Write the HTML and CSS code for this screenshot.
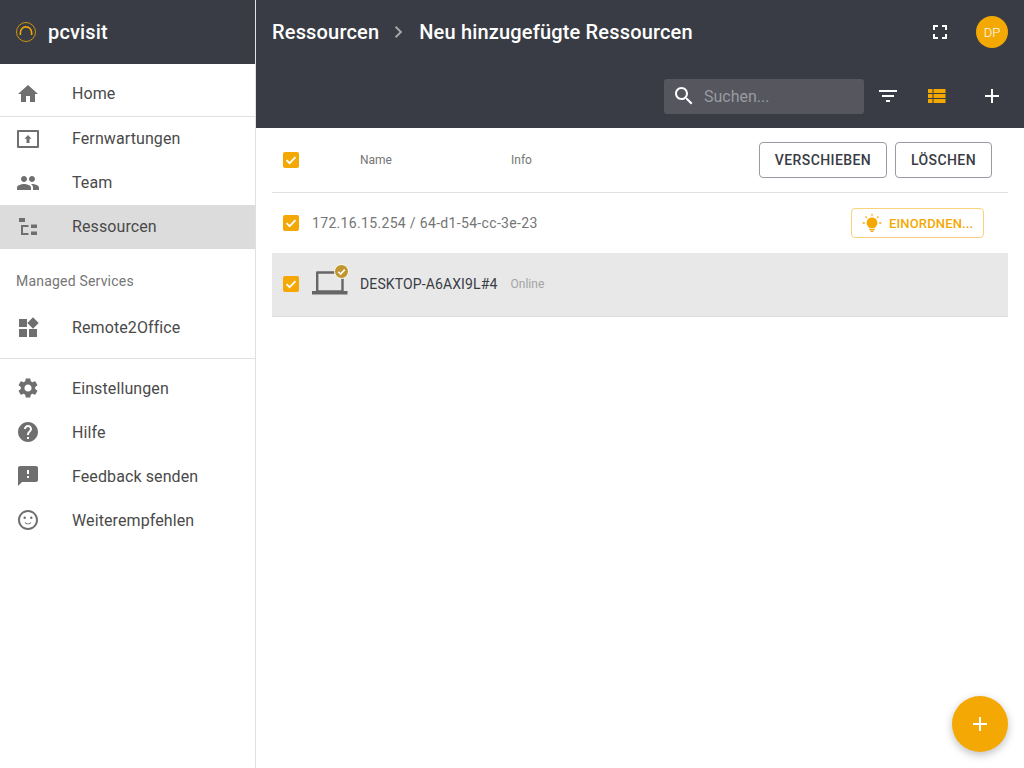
FILE: index.html
```html
<!DOCTYPE html>
<html lang="de">
<head>
<meta charset="utf-8">
<title>pcvisit</title>
<link rel="stylesheet" href="styles.css">
</head>
<body>
<div class="app">
  <aside class="sidebar">
    <div class="brand">
      <svg class="logo" viewBox="0 0 20 20" width="20" height="20"><circle cx="10" cy="10" r="9.500" fill="none" stroke="#f4a803" stroke-width="0.8"/><path d="M4.400 13V10.500a5.600 5.600 0 0 1 11.200 0V13" fill="none" stroke="#f4a803" stroke-width="1.600"/></svg>
      <span class="brand-name">pcvisit</span>
    </div>
    <nav class="nav-first">
      <a class="item item-home"><svg class="ic" viewBox="0 0 24 24"><path d="M10 20v-6h4v6h5v-8h3L12 3 2 12h3v8z"/></svg><span>Home</span></a>
      <a class="item"><svg class="ic" viewBox="0 0 24 24"><path fill-rule="evenodd" d="M2 3h20a1 1 0 0 1 1 1v16a1 1 0 0 1-1 1H2a1 1 0 0 1-1-1V4a1 1 0 0 1 1-1zm1 2v14h18V5z"/><path d="M12 8l-3.500 3.800h2V16h3v-4.200h2z"/></svg><span>Fernwartungen</span></a>
      <a class="item"><svg class="ic" viewBox="0 0 24 24"><path d="M16 11c1.660 0 2.990-1.340 2.990-3S17.660 5 16 5s-3 1.340-3 3 1.340 3 3 3zm-8 0c1.660 0 2.990-1.340 2.990-3S9.660 5 8 5 5 6.340 5 8s1.340 3 3 3zm0 2c-2.330 0-7 1.170-7 3.500V19h14v-2.500c0-2.330-4.670-3.500-7-3.500zm8 0c-.290 0-.620.020-.970.050 1.160.840 1.970 1.970 1.970 3.450V19h6v-2.500c0-2.330-4.670-3.500-7-3.500z"/></svg><span>Team</span></a>
      <a class="item active"><svg class="ic" viewBox="0 0 24 24"><path d="M3 3h6v4H3zM15 9.500h6V13h-6zM15 16.500h6V20h-6zM5 10h7.500v2H7v6h5.500v2H5z"/></svg><span>Ressourcen</span></a>
    </nav>
    <div class="subheader">Managed Services</div>
    <nav class="nav-services">
      <a class="item"><svg class="ic" viewBox="0 0 24 24"><path d="M3 3h8v8H3zM3 13h8v8H3zM13 13h8v8h-8zM17 1.300 22.700 7 17 12.700 11.300 7z"/></svg><span>Remote2Office</span></a>
    </nav>
    <nav class="nav-last">
      <a class="item"><svg class="ic" viewBox="0 0 24 24"><path d="M19.140 12.940c.040-.300.060-.610.060-.940 0-.320-.020-.640-.070-.940l2.030-1.580c.180-.140.230-.410.120-.610l-1.920-3.320c-.120-.220-.370-.290-.590-.220l-2.390.960c-.500-.380-1.030-.700-1.620-.940l-.360-2.540c-.040-.240-.240-.410-.480-.410h-3.840c-.240 0-.430.170-.470.410l-.360 2.540c-.590.240-1.130.570-1.620.940l-2.390-.960c-.220-.080-.470 0-.590.220L2.740 8.870c-.120.210-.080.470.120.610l2.030 1.580c-.050.300-.090.630-.090.940s.020.640.070.940l-2.030 1.580c-.180.140-.230.410-.120.610l1.920 3.320c.120.220.370.290.590.220l2.390-.960c.500.380 1.030.700 1.620.940l.360 2.540c.050.240.240.410.480.410h3.840c.240 0 .440-.170.470-.410l.360-2.540c.590-.240 1.130-.560 1.620-.940l2.390.960c.220.080.470 0 .590-.220l1.920-3.320c.120-.220.070-.470-.120-.610l-2.010-1.580zM12 15.600c-1.980 0-3.600-1.620-3.600-3.600s1.620-3.600 3.600-3.600 3.600 1.620 3.600 3.600-1.620 3.600-3.600 3.600z"/></svg><span>Einstellungen</span></a>
      <a class="item"><svg class="ic" viewBox="0 0 24 24"><path d="M12 2C6.480 2 2 6.480 2 12s4.480 10 10 10 10-4.480 10-10S17.520 2 12 2zm1 17h-2v-2h2v2zm2.070-7.750l-.900.920C13.450 12.900 13 13.500 13 15h-2v-.500c0-1.100.450-2.100 1.170-2.830l1.240-1.260c.370-.360.590-.860.590-1.410 0-1.100-.900-2-2-2s-2 .900-2 2H8c0-2.210 1.790-4 4-4s4 1.790 4 4c0 .880-.360 1.680-.930 2.250z"/></svg><span>Hilfe</span></a>
      <a class="item"><svg class="ic" viewBox="0 0 24 24"><path d="M20 2H4c-1.100 0-1.990.900-1.990 2L2 22l4-4h14c1.100 0 2-.900 2-2V4c0-1.100-.900-2-2-2zm-7 12h-2v-2h2v2zm0-4h-2V6h2v4z"/></svg><span>Feedback senden</span></a>
      <a class="item"><svg class="ic" viewBox="0 0 24 24"><path d="M11.990 2C6.470 2 2 6.480 2 12s4.470 10 9.990 10C17.520 22 22 17.520 22 12S17.520 2 11.990 2zM12 20c-4.420 0-8-3.580-8-8s3.580-8 8-8 8 3.580 8 8-3.580 8-8 8z"/><circle cx="15.300" cy="9.800" r="1.200"/><circle cx="8.700" cy="9.800" r="1.200"/><path d="M12 16.300c-1.300 0-2.500-.5-3.300-1.500l.6-.5c.7.800 1.700 1.200 2.700 1.200s2-.4 2.700-1.200l.6.500c-.8 1-2 1.500-3.300 1.500z"/></svg><span>Weiterempfehlen</span></a>
    </nav>
  </aside>

  <main class="main">
    <header class="topbar">
      <div class="top-row">
        <h1 class="crumbs">
          <span>Ressourcen</span>
          <svg class="crumb-sep" viewBox="0 0 24 24"><path d="M9.300 6 7.900 7.400l4.600 4.600-4.600 4.600L9.300 18l6-6z"/></svg>
          <span>Neu hinzugefügte Ressourcen</span>
        </h1>
        <div class="top-actions">
          <svg class="top-ic" viewBox="0 0 24 24"><path d="M7 14H5v5h5v-2H7v-3zm-2-4h2V7h3V5H5v5zm12 7h-3v2h5v-5h-2v3zM14 5v2h3v3h2V5h-5z"/></svg>
          <div class="avatar">DP</div>
        </div>
      </div>
      <div class="tool-row">
        <div class="search">
          <svg class="search-ic" viewBox="0 0 24 24"><path d="M15.500 14h-.790l-.280-.270C15.410 12.590 16 11.110 16 9.500 16 5.910 13.090 3 9.500 3S3 5.910 3 9.500 5.910 16 9.500 16c1.610 0 3.090-.590 4.230-1.570l.270.280v.790l5 4.990L20.490 19l-4.990-5zm-6 0C7.010 14 5 11.990 5 9.500S7.010 5 9.500 5 14 7.010 14 9.500 11.990 14 9.500 14z"/></svg>
          <span class="search-text">Suchen...</span>
        </div>
        <svg class="tool-ic" viewBox="0 0 24 24"><path d="M10 18h4v-2h-4v2zM3 6v2h18V6H3zm3 7h12v-2H6v2z"/></svg>
        <svg class="tool-ic list-ic" viewBox="0 0 24 24"><path d="M4 5h4.500v4H4zM4 10h4.500v4H4zM4 15h4.500v4H4zM9.500 5h12v4h-12zM9.500 10h12v4h-12zM9.500 15h12v4h-12z"/></svg>
        <svg class="tool-ic add-ic" viewBox="0 0 24 24"><path d="M19 13h-6v6h-2v-6H5v-2h6V5h2v6h6v2z"/></svg>
      </div>
    </header>

    <section class="table">
      <div class="row head">
        <span class="check"><svg viewBox="0 0 16 16"><path d="M3.500 8.200 6.600 11.200 12.500 5.200" /></svg></span>
        <span class="col-name">Name</span>
        <span class="col-info">Info</span>
        <div class="head-actions">
          <button class="btn btn-move">VERSCHIEBEN</button>
          <button class="btn btn-del">LÖSCHEN</button>
        </div>
      </div>
      <div class="row group">
        <span class="check"><svg viewBox="0 0 16 16"><path d="M3.500 8.200 6.600 11.200 12.500 5.200" /></svg></span>
        <span class="group-label">172.16.15.254 / 64-d1-54-cc-3e-23</span>
        <button class="sort-btn">
          <svg class="bulb" viewBox="0 0 20 20"><path d="M7.300 15.800h5.400v1.100H7.300zM8 17.500h4c0 .8-.9 1.500-2 1.500s-2-.7-2-1.500zM10 4.500a5.300 5.300 0 0 0-3 9.700v.9h6v-.9a5.300 5.300 0 0 0-3-9.700z"/><path d="M10 .8v2M3.500 3.500l1.400 1.400M16.500 3.500l-1.400 1.400M.8 10h2M17.200 10h2" class="bulb-ray"/></svg>
          EINORDNEN...
        </button>
      </div>
      <div class="row device">
        <span class="check"><svg viewBox="0 0 16 16"><path d="M3.500 8.200 6.600 11.200 12.500 5.200" /></svg></span>
        <span class="device-ic">
          <svg viewBox="0 0 36 28" width="36" height="28"><path d="M5.200 2.500h25.300v19H5.200z" fill="none" stroke="#666" stroke-width="2.400" stroke-linejoin="round"/><path d="M0 21h35.500v3.500H0z" fill="#666"/></svg>
          <span class="status"><svg viewBox="0 0 12 12"><path d="M3 6.200 5.200 8.300 9 4.300"/></svg></span>
        </span>
        <span class="device-name">DESKTOP-A6AXI9L#4</span>
        <span class="device-status">Online</span>
      </div>
    </section>

    <button class="fab"><svg viewBox="0 0 24 24"><path d="M19 13h-6v6h-2v-6H5v-2h6V5h2v6h6v2z"/></svg></button>
  </main>
</div>
</body>
</html>
```
FILE: styles.css
```css
* { box-sizing: border-box; }
html, body { margin: 0; height: 100%; overflow: hidden; }
body { font-family: Roboto, "Liberation Sans", sans-serif; color: #424242; background: #fff; }

.app { display: flex; height: 768px; }

.sidebar { width: 256px; flex: none; border-right: 1px solid #e0e0e0; background: #fff; }
.brand { height: 64px; background: #393c44; display: flex; align-items: center; padding-left: 16px; gap: 12px; }
.logo { display: block; }
.brand-name { color: #fff; font-size: 20px; font-weight: 500; letter-spacing: 0.15px; }

.nav-first { padding-top: 8px; }
.item { display: flex; align-items: center; height: 44px; padding-left: 16px; font-size: 16px; color: #4a4a4a; letter-spacing: 0.1px; }
.item span { margin-left: 32px; }
.nav-first .item span, .nav-services .item span { margin-bottom: 2px; }
.item-home { height: 45px; border-bottom: 1px solid #e0e0e0; }
.item.active { background: #dcdcdc; }
.ic { width: 24px; height: 24px; fill: #6f6f6f; flex: none; }

.subheader { height: 49px; margin-top: 7px; padding: 16px 0 0 16px; font-size: 14px; line-height: 18px; color: #757575; letter-spacing: 0.2px; }
.nav-services { height: 54px; padding-top: 1px; border-bottom: 1px solid #e0e0e0; }
.nav-last { padding-top: 7px; }

.main { flex: 1; position: relative; min-width: 0; }
.topbar { height: 128px; background: #393c44; color: #fff; }
.top-row { height: 64px; display: flex; align-items: center; justify-content: space-between; padding: 0 16px; }
.crumbs { margin: 0; display: flex; align-items: center; font-size: 20px; font-weight: 500; color: #fff; letter-spacing: 0.17px; }
.crumb-sep { width: 24px; height: 24px; fill: #a8a8a8; margin: 0 8px; }
.top-actions { display: flex; align-items: center; gap: 24px; }
.top-ic { width: 24px; height: 24px; fill: #fff; }
.avatar { width: 32px; height: 32px; border-radius: 50%; background: #f4a803; color: #fff; font-size: 13px; font-weight: 300; display: flex; align-items: center; justify-content: center; }

.tool-row { height: 64px; display: flex; align-items: center; justify-content: flex-end; padding-right: 20px; }
.search { width: 200px; height: 35px; background: #55565e; border-radius: 3px; display: flex; align-items: center; padding-left: 8px; margin-right: 12px; }
.search-ic { width: 24px; height: 24px; fill: #fff; }
.search-text { margin-left: 8px; color: #9a9ba0; font-size: 16px; }
.tool-ic { width: 24px; height: 24px; fill: #fff; flex: none; }
.list-ic { fill: #f4a803; margin-left: 24px; }
.add-ic { margin-left: 32px; }

.table { margin: 0 16px; }
.row { display: flex; align-items: center; }
.check { width: 16px; height: 16px; margin-left: 11px; background: #f4a803; border-radius: 2px; flex: none; display: flex; }
.check svg { width: 16px; height: 16px; fill: none; stroke: #fff; stroke-width: 1.8; }

.head { height: 65px; border-bottom: 1px solid #e0e0e0; font-size: 12px; color: #757575; }
.col-name { margin-left: 61px; width: 151px; }
.col-info { flex: none; }
.head-actions { margin-left: auto; display: flex; gap: 8px; padding-right: 16px; }
.btn { height: 36px; background: #fff; border: 1px solid #9a9aa2; border-radius: 4px; font: 500 14px Roboto, "Liberation Sans", sans-serif; letter-spacing: 0.4px; color: #393c44; padding: 0; }
.btn-move { width: 128px; }
.btn-del { width: 97px; }

.group { height: 60px; font-size: 14px; color: #757575; }
.group-label { margin-left: 13px; margin-bottom: 1px; letter-spacing: 0.33px; }
.sort-btn { margin-left: auto; margin-right: 24px; width: 133px; height: 30px; background: #fff; border: 1px solid #f9d27e; border-radius: 4px; color: #f4a803; font: 500 13px Roboto, "Liberation Sans", sans-serif; letter-spacing: 0.15px; display: flex; align-items: center; justify-content: flex-start; padding: 0 0 0 10px; gap: 7px; }
.bulb { width: 20px; height: 20px; fill: #f4a803; flex: none; }
.bulb-ray { fill: none; stroke: #f4a803; stroke-width: 1.300; }

.device { height: 64px; padding-bottom: 2px; background: #e8e8e8; border-bottom: 1px solid #dcdcdc; }
.device-ic { position: relative; width: 36px; height: 28px; margin-left: 13px; flex: none; display: block; }
.device-ic > svg { display: block; }
.status { position: absolute; top: -6px; right: -1px; width: 15px; height: 15px; border-radius: 50%; background: #c0972f; border: 1px solid #fff; display: flex; }
.status svg { width: 13px; height: 13px; fill: none; stroke: #fff; stroke-width: 1.500; }
.device-name { margin-left: 12px; font-size: 14px; color: #393c44; letter-spacing: 0.12px; }
.device-status { margin-left: 13px; font-size: 12px; color: #a3a3a3; letter-spacing: 0.05px; }

.fab { position: absolute; right: 16px; bottom: 16px; width: 56px; height: 56px; border: 0; padding: 16px; border-radius: 50%; background: #f4a803; box-shadow: 0 3px 8px rgba(0,0,0,0.25); display: flex; }
.fab svg { width: 24px; height: 24px; fill: #fff; }
```
